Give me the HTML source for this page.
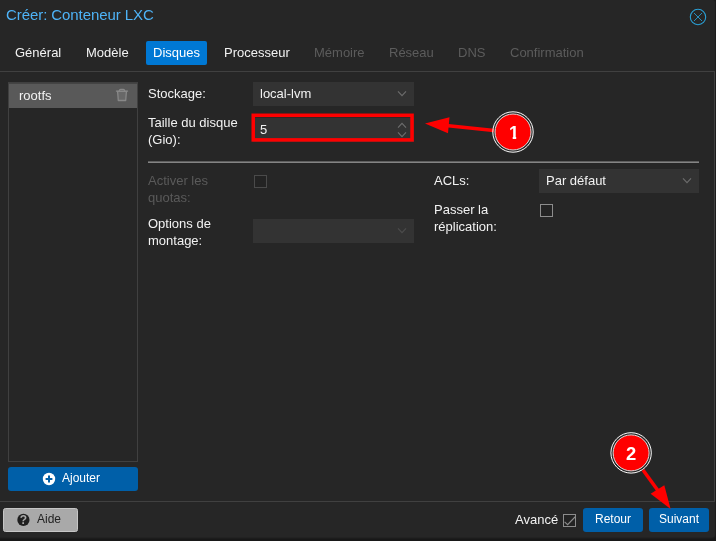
<!DOCTYPE html>
<html lang="fr">
<head>
<meta charset="utf-8">
<title>Créer: Conteneur LXC</title>
<style>
html,body{margin:0;padding:0;}
body{width:716px;height:541px;overflow:hidden;background:#181818;font-family:"Liberation Sans",Arial,Helvetica,sans-serif;font-size:13px;color:#f2f2f2;position:relative;}
.win{will-change:transform;position:absolute;left:0;top:0;width:715px;height:538px;background:linear-gradient(#262626,#262626 537px,#222 537px);border-radius:0 2px 3px 0;overflow:hidden;box-shadow:0 0 0 1px #1c1c1c;}
.abs{position:absolute;white-space:nowrap;}
.title{left:6px;top:6px;letter-spacing:-0.075px;font-size:15px;line-height:18px;color:#4eb3f7;}
.tab{position:absolute;top:41px;height:24px;line-height:24px;font-size:13px;color:#f2f2f2;white-space:nowrap;}
.tab.dis{color:#5c5c5c;}
.tab.act{background:#0078d4;border-radius:2px;color:#fff;}
.body{position:absolute;left:-1px;top:71px;width:716px;height:431px;border:1px solid #404040;box-sizing:border-box;}
.lbl{position:absolute;font-size:13px;line-height:17px;color:#f2f2f2;white-space:nowrap;}
.lbl.dis{color:#5a5a5a;}
.fld{position:absolute;background:#333;height:24px;box-sizing:border-box;font-size:13px;line-height:24px;color:#f2f2f2;padding-left:7px;}
.cb{position:absolute;width:13px;height:13px;box-sizing:border-box;border:1px solid #8c8c8c;background:#232323;}
.btn{position:absolute;height:24px;border-radius:3px;background:#005fa8;color:#fff;font-size:12px;line-height:23px;text-align:center;white-space:nowrap;}
</style>
</head>
<body>
<div class="win">
  <div class="abs title">Créer: Conteneur LXC</div>
  <svg class="abs" style="left:688px;top:7px" width="20" height="20" viewBox="0 0 20 20"><circle cx="10" cy="10" r="7.7" fill="none" stroke="#2a9fd4" stroke-width="1.1"/><path d="M6 6 L14 14 M14 6 L6 14" stroke="#2898cc" stroke-width="0.9" fill="none"/></svg>

  <div class="tab" style="left:15px">Général</div>
  <div class="tab" style="left:86px">Modèle</div>
  <div class="tab act" style="left:146px;width:61px;text-align:center">Disques</div>
  <div class="tab" style="left:224px">Processeur</div>
  <div class="tab dis" style="left:314px">Mémoire</div>
  <div class="tab dis" style="left:389px">Réseau</div>
  <div class="tab dis" style="left:458px">DNS</div>
  <div class="tab dis" style="left:510px">Confirmation</div>

  <div class="body"></div>

  <!-- left panel -->
  <div class="abs" style="left:8px;top:82px;width:130px;height:380px;border:1px solid #404040;box-sizing:border-box;"></div>
  <div class="abs" style="left:9px;top:83px;width:128px;height:25px;background:#595959;border-top:1px solid #444;box-sizing:border-box;"></div>
  <div class="lbl" style="left:19px;top:87px;">rootfs</div>
  <svg class="abs" style="left:114px;top:86px" width="16" height="18" viewBox="114 86 16 18"><path d="M119.4 90.9q0-1.5 1.2-1.5h2.8q1.2 0 1.2 1.5" fill="none" stroke="#888" stroke-width="1.2"/><path d="M115.9 91.1h12.2" stroke="#888" stroke-width="1.3"/><path d="M117.6 91.4l0.7 9.1h7.4l0.7-9.1z" fill="#686868" stroke="#888" stroke-width="1.3" stroke-linejoin="round"/></svg>
  <div class="btn" style="left:8px;top:467px;width:130px;"><span style="position:absolute;left:54px;top:0">Ajouter</span></div>
  <svg class="abs" style="left:42px;top:472px" width="14" height="14" viewBox="0 0 14 14"><circle cx="7" cy="7" r="6.2" fill="#fff"/><path d="M7 3.6v6.8M3.6 7h6.8" stroke="#005fa8" stroke-width="2"/></svg>

  <!-- form -->
  <div class="lbl" style="left:148px;top:85px;">Stockage:</div>
  <div class="fld" style="left:253px;top:82px;width:161px;">local-lvm</div>
  <svg class="abs" style="left:396px;top:88px" width="12" height="12" viewBox="396 88 12 12"><path d="M398 91.3l4 4.3 4-4.3" fill="none" stroke="#6c6c6c" stroke-width="1.15"/></svg>

  <div class="lbl" style="left:148px;top:114px;">Taille du disque<br>(Gio):</div>
  <div class="fld" style="left:253px;top:118px;width:161px;">5</div>
  <svg class="abs" style="left:396px;top:120px" width="12" height="20" viewBox="396 120 12 20"><path d="M398 127.6l4-4.2 4 4.2M398 132.4l4 4.2 4-4.2" fill="none" stroke="#6e6e6e" stroke-width="1.1"/></svg>
  

  <div class="abs" style="left:148px;top:161px;width:551px;height:1px;background:#5e5e5e;border-bottom:1px solid #848484;"></div>

  <div class="lbl dis" style="left:148px;top:172px;">Activer les<br>quotas:</div>
  <div class="cb" style="left:254px;top:175px;border-color:#4a4a4a;"></div>

  <div class="lbl" style="left:148px;top:215px;">Options de<br>montage:</div>
  <div class="fld" style="left:253px;top:219px;width:161px;"></div>
  <svg class="abs" style="left:396px;top:225px" width="12" height="12" viewBox="396 225 12 12"><path d="M398 228.3l4 4.3 4-4.3" fill="none" stroke="#4c4c4c" stroke-width="1.15"/></svg>

  <div class="lbl" style="left:434px;top:172px;">ACLs:</div>
  <div class="fld" style="left:539px;top:169px;width:160px;">Par défaut</div>
  <svg class="abs" style="left:681px;top:175px" width="12" height="12" viewBox="681 175 12 12"><path d="M683 178.3l4 4.3 4-4.3" fill="none" stroke="#6c6c6c" stroke-width="1.15"/></svg>

  <div class="lbl" style="left:434px;top:201px;">Passer la<br>réplication:</div>
  <div class="cb" style="left:540px;top:204px;"></div>

  <!-- bottom bar -->
  <div class="abs" style="left:3px;top:508px;width:75px;height:24px;background:#a9a9a9;border-radius:2.5px;box-sizing:border-box;border:1px solid #c6c6c6;"></div>
  <svg class="abs" style="left:16px;top:512px" width="16" height="16" viewBox="16 512 16 16"><circle cx="23.4" cy="519.9" r="6.1" fill="#1f1f1f"/><text x="23.4" y="524.2" font-family="Liberation Sans, sans-serif" font-size="12" font-weight="bold" fill="#a9a9a9" text-anchor="middle">?</text></svg>
  <div class="abs" style="left:37px;top:508px;line-height:23px;font-size:12px;color:#222;">Aide</div>

  <div class="abs" style="left:515px;top:511px;line-height:17px;font-size:13px;">Avancé</div>
  <div class="cb" style="left:563px;top:514px;border-color:#8c8c8c;"></div>
  <svg class="abs" style="left:563px;top:514px" width="13" height="13" viewBox="563 514 13 13"><path d="M564.6 521.8l3 2.9 7.9-8.2" fill="none" stroke="#8c8c8c" stroke-width="1.1"/></svg>
  <div class="btn" style="left:583px;top:508px;width:60px;">Retour</div>
  <div class="btn" style="left:649px;top:508px;width:60px;">Suivant</div>

  <!-- annotations -->
  <svg class="abs" style="left:0;top:0" width="716" height="541" viewBox="0 0 716 541">
    <rect x="253.25" y="115.3" width="158.8" height="24.6" fill="none" stroke="#f00" stroke-width="3.55"/>
    <g>
      <line x1="494" y1="130.5" x2="446" y2="125.5" stroke="#f00" stroke-width="3.5"/>
      <polygon points="425,123.5 449.5,117.3 448,133.2" fill="#f00"/>
      <circle cx="513" cy="132" r="20.2" fill="none" stroke="#fff" stroke-width="1"/>
      <circle cx="513" cy="132" r="18" fill="#f00" stroke="#ddd" stroke-width="1"/>
      <clipPath id="c1"><path d="M500 120h26v16.3h-9.8v4h-3.5v-4H500z"/></clipPath><text x="514" y="138.7" clip-path="url(#c1)" font-family="Liberation Sans, sans-serif" font-size="18" font-weight="bold" fill="#fff" text-anchor="middle">1</text>
    </g>
    <g>
      <line x1="643" y1="470" x2="659" y2="492" stroke="#f00" stroke-width="3.5"/>
      <polygon points="670.6,509 650.6,493.8 664.3,485.2" fill="#f00"/>
      <circle cx="631.1" cy="452.9" r="20.2" fill="none" stroke="#fff" stroke-width="1"/>
      <circle cx="631.1" cy="452.9" r="18" fill="#f00" stroke="#ddd" stroke-width="1"/>
      <text x="631.1" y="459.8" font-family="Liberation Sans, sans-serif" font-size="18.4" font-weight="bold" fill="#fff" text-anchor="middle">2</text>
    </g>
  </svg>
</div>
</body>
</html>
